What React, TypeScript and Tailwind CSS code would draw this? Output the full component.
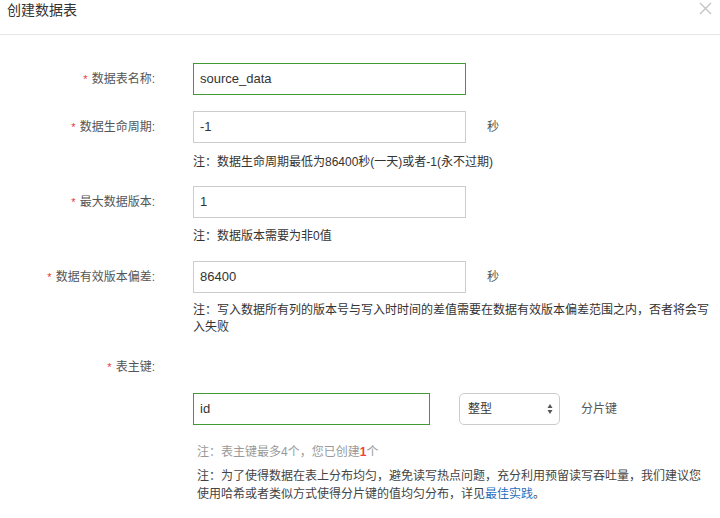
import React from 'react';

const FONT = "font-['Liberation_Sans','Noto_Sans_CJK_SC',sans-serif]";

function Label({ text }: { text: string }) {
  return (
    <div className="w-[193px] shrink-0 pr-[38px] text-right text-[12px] leading-[18px] text-[#555]">
      <span className="text-[#e4393c] text-[11px] mr-[4px]">*</span>
      {text}:
    </div>
  );
}

function Field({ value, active, width = 'w-[273px]' }: { value: string; active?: boolean; width?: string }) {
  return (
    <div
      className={`${width} h-[32px] shrink-0 flex items-center px-[6px] text-[13px] text-[#333] border ${
        active ? 'border-[#3f9b32]' : 'border-[#cccccc]'
      }`}
    >
      {value}
    </div>
  );
}

function Row({ label, value, unit, active }: { label: string; value: string; unit?: boolean; active?: boolean }) {
  return (
    <div className="flex items-center h-[32px]">
      <Label text={label} />
      <Field value={value} active={active} />
      {unit && <span className="ml-[21px] text-[12px] text-[#555]">秒</span>}
    </div>
  );
}

export default function App() {
  return (
    <div className={`w-[720px] h-[518px] bg-white overflow-hidden ${FONT}`}>
      {/* Header */}
      <div className="h-[35px] flex justify-between border-b border-[#e5e5e5] pl-[7px] pr-[8px]">
        <div className="text-[14px] leading-[20px] text-[#333]">创建数据表</div>
        <svg width="13" height="13" viewBox="0 0 13 13" className="mt-[2px]">
          <path d="M1 1 L12 12 M12 1 L1 12" stroke="#c4c4c4" strokeWidth="1.4" />
        </svg>
      </div>

      {/* Form */}
      <div className="pt-[28px]">
        <Row label="数据表名称" value="source_data" active />

        <div className="mt-[16px]">
          <Row label="数据生命周期" value="-1" unit />
        </div>
        <div className="mt-[10px] pl-[193px] text-[12px] leading-[18px] text-[#333]">
          注：数据生命周期最低为86400秒(一天)或者-1(永不过期)
        </div>

        <div className="mt-[15px]">
          <Row label="最大数据版本" value="1" />
        </div>
        <div className="mt-[9px] pl-[193px] text-[12px] leading-[18px] text-[#333]">注：数据版本需要为非0值</div>

        <div className="mt-[16px]">
          <Row label="数据有效版本偏差" value="86400" unit />
        </div>
        <div className="mt-[9px] ml-[193px] w-[520px] text-[12px] leading-[17px] text-[#333]">
          注：写入数据所有列的版本号与写入时时间的差值需要在数据有效版本偏差范围之内，否者将会写入失败
        </div>

        {/* Primary key */}
        <div className="mt-[22px] flex">
          <Label text="表主键" />
        </div>
        <div className="mt-[17px] flex items-center pl-[193px]">
          <Field value="id" active width="w-[237px]" />
          <div className="ml-[29px] w-[101px] h-[32px] rounded-[5px] border border-[#cccccc] flex items-center justify-between pl-[8px] pr-[6px] text-[12px] text-[#333]">
            <span>整型</span>
            <svg width="6" height="12" viewBox="0 0 6 12">
              <path d="M3 1 L5.5 5 L0.5 5 Z M3 11 L5.5 7 L0.5 7 Z" fill="#555" />
            </svg>
          </div>
          <span className="ml-[21px] text-[12px] text-[#555]">分片键</span>
        </div>
        <div className="mt-[18px] ml-[197px] text-[12px] leading-[18px] text-[#999]">
          注：表主键最多4个，您已创建<span className="text-[#f04134] font-bold">1</span>个
        </div>
        <div className="mt-[6px] ml-[197px] w-[513px] text-[12px] leading-[18px] text-[#444]">
          注：为了使得数据在表上分布均匀，避免读写热点问题，充分利用预留读写吞吐量，我们建议您使用哈希或者类似方式使得分片键的值均匀分布，详见<span className="text-[#2a6ebd]">最佳实践</span>。
        </div>
      </div>
    </div>
  );
}
